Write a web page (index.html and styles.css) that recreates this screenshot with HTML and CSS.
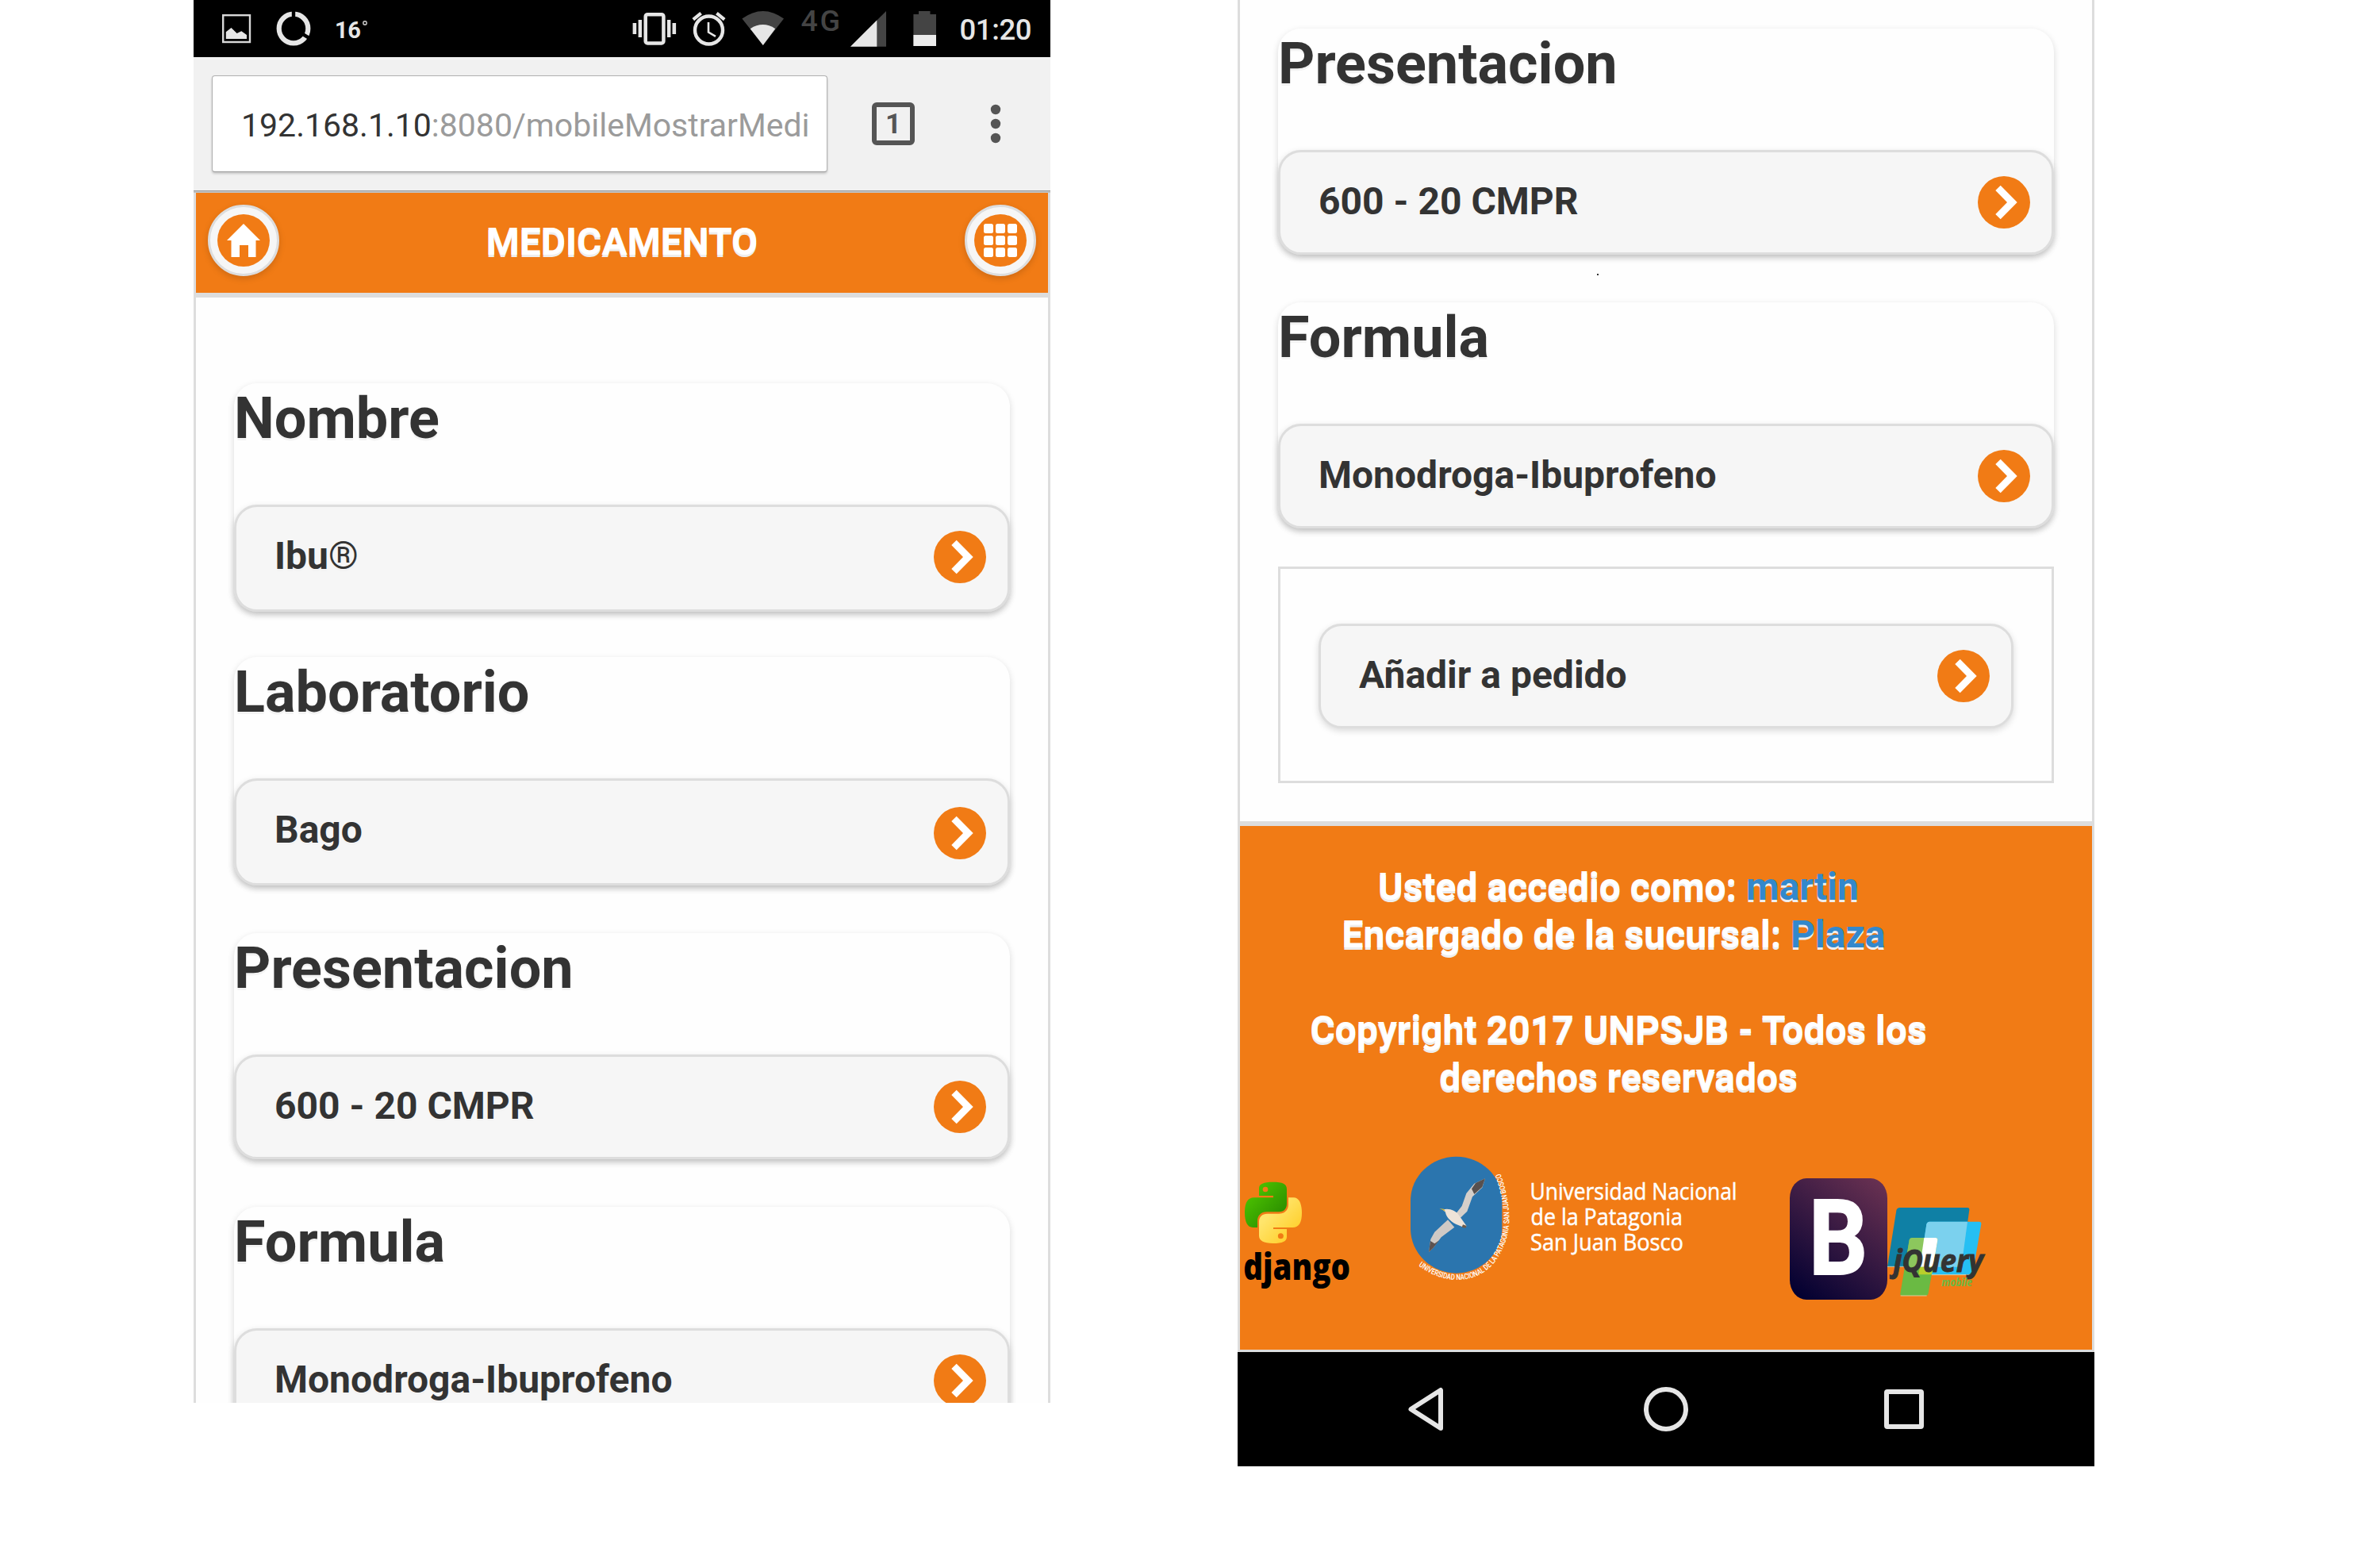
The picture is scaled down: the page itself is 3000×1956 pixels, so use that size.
FILE: index.html
```html
<!DOCTYPE html>
<html lang="es">
<head>
<meta charset="utf-8">
<title>Medicamento</title>
<link rel="stylesheet" href="styles.css">
</head>
<body>
<svg width="0" height="0" class="defs">
  <symbol id="go" viewBox="0 0 66 66">
    <circle cx="33" cy="33" r="33" fill="#f17b15"/>
    <path d="M22.3 18L28.7 11.8L49.7 33L28.7 54.2L22.3 48L37 33Z" fill="#fff"/>
  </symbol>
</svg>

<main class="board">
  <section class="phone phone-top">
    <div class="status">
      <svg width="1080" height="72" viewBox="244 0 1080 72">
        <g fill="#e6e6e6">
          <rect x="281.2" y="19.2" width="33.8" height="33.8" fill="none" stroke="#d8d8d8" stroke-width="2.4"/>
          <path d="M284.8 40.3L291.5 35L298.6 42L304.3 39.3L311 44V49H284.8Z"/>
          <circle cx="370" cy="36" r="18.3" fill="none" stroke="#e6e6e6" stroke-width="6.2"/>
          <path d="M370 12V26M380.5 42.3L392.4 49.6" stroke="#000" stroke-width="4.4" fill="none"/>
          <text x="422" y="47.8" font-size="29" font-weight="700" textLength="33">16</text>
          <circle cx="460" cy="29" r="2.2" fill="none" stroke="#ccc" stroke-width="1.4"/>
          <rect x="813.7" y="18.2" width="22.7" height="36.3" rx="2.5" fill="none" stroke="#e6e6e6" stroke-width="4.5"/>
          <path d="M797.6 29h4.6v14h-4.6zM804.6 25h4.4v22h-4.4zM841 25h4.4v22H841zM847.5 29h4.6v14h-4.6z"/>
          <g fill="none" stroke="#e6e6e6">
            <circle cx="893.5" cy="38" r="17.5" stroke-width="4.4"/>
            <path d="M893 28V40.6L902 45.8" stroke-width="2.6"/>
            <path d="M873.8 24.6L883.6 16.6M903.4 16.6L913.2 24.6" stroke-width="4.2"/>
          </g>
          <path d="M935.4 23.6Q961.8 4.6 988 23.6L961.8 57Z" fill="#444"/>
          <path d="M945.7 36.2Q961.8 26 977.2 36.2L961.8 57Z"/>
          <text x="1009.5" y="39" font-size="37.5" font-weight="500" fill="#444" textLength="49.5">4G</text>
          <path d="M1117 14V58.8H1072Z" fill="#444"/>
          <path d="M1105.3 25.6V58.8H1072Z"/>
          <path d="M1158 14h14.5v4h7.5v40h-28.6V18h6.6z" fill="#444"/>
          <path d="M1151.4 44H1180V58H1151.4Z" fill="#ececec"/>
          <text x="1209.5" y="50.2" font-size="36.5" font-weight="500" textLength="91">01:20</text>
        </g>
      </svg>
    </div>
    <div class="browser">
      <div class="url">192.168.1.10<span class="path">:8080/mobileMostrarMedi</span></div>
      <div class="tabs">1</div>
      <svg class="more" width="14" height="50" viewBox="0 0 14 50" fill="#555"><circle cx="7" cy="7" r="6.2"/><circle cx="7" cy="25" r="6.2"/><circle cx="7" cy="43" r="6.2"/></svg>
    </div>
    <div class="page">
      <header class="bar">
        <a class="round"><svg width="66" height="66" viewBox="0 0 66 66"><circle cx="33" cy="33" r="33" fill="#f17b15"/><path d="M33 12L54 33H48.5V54H39V39H28V54H17.500V33H12Z" fill="#fff"/></svg></a>
        <h1>MEDICAMENTO</h1>
        <a class="round"><svg width="66" height="66" viewBox="0 0 66 66"><circle cx="33" cy="33" r="33" fill="#f17b15"/><g fill="#fff"><rect x="12" y="12" width="12" height="12" rx="2.500"/><rect x="27" y="12" width="12" height="12" rx="2.500"/><rect x="42" y="12" width="12" height="12" rx="2.500"/><rect x="12" y="27" width="12" height="12" rx="2.500"/><rect x="27" y="27" width="12" height="12" rx="2.500"/><rect x="42" y="27" width="12" height="12" rx="2.500"/><rect x="12" y="42" width="12" height="12" rx="2.500"/><rect x="27" y="42" width="12" height="12" rx="2.500"/><rect x="42" y="42" width="12" height="12" rx="2.500"/></g></svg></a>
      </header>
      <div class="content content-top">
        <section class="group">
          <h2>Nombre</h2>
          <a class="item tall"><span>Ibu<span class="reg">®</span></span><svg class="go"><use href="#go"/></svg></a>
        </section>
        <section class="group">
          <h2>Laboratorio</h2>
          <a class="item tall low"><span>Bago</span><svg class="go"><use href="#go"/></svg></a>
        </section>
        <section class="group">
          <h2>Presentacion</h2>
          <a class="item"><span>600 - 20 CMPR</span><svg class="go"><use href="#go"/></svg></a>
        </section>
        <section class="group">
          <h2>Formula</h2>
          <a class="item"><span>Monodroga-Ibuprofeno</span><svg class="go"><use href="#go"/></svg></a>
        </section>
      </div>
    </div>
  </section>

  <section class="phone phone-bottom">
    <div class="page">
      <div class="content content-bottom">
        <section class="group">
          <h2>Presentacion</h2>
          <a class="item"><span>600 - 20 CMPR</span><svg class="go"><use href="#go"/></svg></a>
          <i class="speck"></i>
        </section>
        <section class="group">
          <h2>Formula</h2>
          <a class="item"><span>Monodroga-Ibuprofeno</span><svg class="go"><use href="#go"/></svg></a>
        </section>
        <div class="frame">
          <a class="item"><span>Añadir a pedido</span><svg class="go"><use href="#go"/></svg></a>
        </div>
      </div>
      <footer class="foot">
        <div class="credits">
          <p>Usted accedio como: <a>martin</a></p>
          <p>Encargado de la sucursal: <a>Plaza</a>&nbsp;</p>
          <p class="copy">Copyright 2017 UNPSJB - Todos los<br>derechos reservados</p>
        </div>
        <div class="logos">
          <svg class="django" width="134" height="139" viewBox="84 174 402 417">
            <defs>
              <linearGradient id="pg" x1="0" y1="0" x2="1" y2="1"><stop offset=".2" stop-color="#4abf00"/><stop offset=".8" stop-color="#2c9000"/></linearGradient>
              <linearGradient id="py" x1="0" y1="0" x2="1" y2="1"><stop offset=".3" stop-color="#ffe56c"/><stop offset=".8" stop-color="#ffd02f"/></linearGradient>
            </defs>
            <path d="M141 231V203C141 186 158 179 194 179C230 179 246 186 246 206V262C246 281 234 292 216 292H170C149 292 135 306 135 326V351H118C97 351 87 330 87 295C87 260 97 238 122 238H195V231Z" fill="url(#pg)"/>
            <circle cx="165" cy="207" r="10" fill="#f17b15"/>
            <path d="M252 238H272C293 238 303 262 303 296C303 330 293 351 268 351H195V357H246V386C246 403 230 411 194 411C158 411 141 401 141 382V330C141 311 153 299 172 299H216C239 299 252 284 252 264Z" fill="url(#py)"/>
            <circle cx="223" cy="383" r="10.500" fill="#f17b15"/>
            <text x="82" y="549" class="dj" textLength="404" lengthAdjust="spacingAndGlyphs">django</text>
          </svg>
          <svg class="seal" width="133" height="166" viewBox="702 72 399 498">
            <path id="rim" d="M744 496C850 575 985 570 1050 455C1100 370 1100 270 1048 130" fill="none"/>
            <path d="M887 83C980 83 1060 155 1060 250V355C1060 450 980 524 887 524C794 524 714 450 714 355V250C714 155 794 83 887 83Z" fill="#2b75ae"/>
            <path d="M996 166L955 185L925 222L908 270L886 298L903 314L928 290L948 235L985 200Z" fill="#d5cfca"/>
            <path d="M996 166L960 183L945 205L955 225L985 198Z" fill="#57504f"/>
            <path d="M855 322L805 368L790 395L783 444L800 428L830 388L880 350Z" fill="#cfc9c5"/>
            <path d="M789 402L783 444L800 428L822 400L805 412Z" fill="#5d5250"/>
            <path d="M836 284C850 278 872 280 892 298L926 346L918 352L885 338C862 326 848 308 846 293Z" fill="#eee3d8"/>
            <path d="M823 279L840 281L846 290Z" fill="#c9b23c"/>
            <path d="M912 340L926 345L922 353L908 350Z" fill="#6b5b4c"/>
            <text class="rimtext" textLength="672" lengthAdjust="spacingAndGlyphs"><textPath href="#rim" startOffset="0" textLength="672" lengthAdjust="spacingAndGlyphs">UNIVERSIDAD NACIONAL DE LA PATAGONIA SAN JUAN BOSCO</textPath></text>
          </svg>
          <svg class="uni" width="262" height="110" viewBox="1928 1480 262 110">
            <text x="1928.500" y="1511.700" textLength="261" lengthAdjust="spacingAndGlyphs">Universidad Nacional</text>
            <text x="1929.500" y="1544" textLength="191.500" lengthAdjust="spacingAndGlyphs">de la Patagonia</text>
            <text x="1929" y="1576" textLength="193" lengthAdjust="spacingAndGlyphs">San Juan Bosco</text>
          </svg>
          <div class="bootstrap"><span>B</span></div>
          <svg class="jquery" width="124" height="114" viewBox="477 213 372 342">
            <path d="M525 216H780Q788 216 787 224L757 440H477L511 227Q513 216 525 216Z" fill="#0f80a5"/>
            <path d="M637 269H824Q833 269 832 278L800 462Q798 470 790 470H596L625 280Q627 269 637 269Z" fill="#26bff3"/>
            <path d="M637 269H780L757 440H600L625 280Q627 269 637 269Z" fill="#7bd1ee"/>
            <path d="M570 330H659Q668 330 667 339L632 540Q630 549 622 549H532Q525 549 526 541L560 338Q562 330 570 330Z" fill="#6aba43"/>
            <path d="M570 330H617L600 440H543L560 338Q562 330 570 330Z" fill="#8cc75d"/>
            <path d="M616 330H659Q668 330 667 339L650 440H600Z" fill="#fff"/>
            <path d="M600 440H650L645 469H595Z" fill="#b9cf2b"/>
            <path d="M477 439H543M527 549H626M645 470H795" stroke="#e9d9b0" stroke-width="2.500"/>
            <text x="500" y="460" class="jq" textLength="340" lengthAdjust="spacingAndGlyphs">jQuery</text>
            <text x="682" y="512" class="jm" textLength="116" lengthAdjust="spacingAndGlyphs">mobile</text>
          </svg>
        </div>
      </footer>
    </div>
    <nav class="keys">
      <svg width="60" height="60" viewBox="0 0 60 60"><path d="M46 6V54L8.500 30Z"/></svg>
      <svg width="60" height="60" viewBox="0 0 60 60"><circle cx="30" cy="30" r="25"/></svg>
      <svg width="60" height="60" viewBox="0 0 60 60"><rect x="8" y="8" width="44" height="44" rx="1"/></svg>
    </nav>
  </section>
</main>
</body>
</html>
```
FILE: styles.css
```css
* { box-sizing: border-box; }
body {
  margin: 0;
  background: #fff;
  color: #333;
  font-family: Roboto, sans-serif;
}
.defs { display: block; height: 0; }
h1, h2, p { margin: 0; }
svg { display: block; flex: none; overflow: visible; }

.board {
  display: flex;
  align-items: flex-start;
  gap: 236px;
  height: 1956px;
  padding-left: 244px;
  overflow: hidden;
}
.phone { width: 1080px; overflow: hidden; }
.phone-top { height: 1768px; }
.phone-bottom { height: 1848px; }

.status { height: 72px; background: #000; }

.browser {
  display: flex;
  align-items: center;
  height: 171px;
  padding: 0 62px 3px 23px;
  background: linear-gradient(#999 0 1px, #c2c2c2 1px) 0 100% / 100% 3px no-repeat #f1f1f1;
}
.url {
  width: 776px;
  height: 122px;
  padding-left: 36px;
  border: 1px solid #b0b0b0;
  border-bottom-color: #999;
  border-radius: 4px;
  background: #fff;
  box-shadow: 0 2px 3px rgba(0, 0, 0, .18);
  font-size: 41px;
  line-height: 124px;
  white-space: nowrap;
}
.path { color: #9b9b9b; }
.tabs {
  width: 54px;
  height: 54px;
  margin-left: 56px;
  border: 6px solid #555;
  border-radius: 6px;
  color: #555;
  font-size: 35px;
  font-weight: 700;
  line-height: 43px;
  text-align: center;
}
.more { margin-left: auto; }

.page {
  border: solid #ddd;
  border-width: 0 3px;
  background: #fefefe;
}
.bar {
  display: flex;
  align-items: flex-start;
  justify-content: space-between;
  height: 132px;
  padding: 15px;
  border-bottom: 6px solid #ddd;
  background: #f17b15;
}
.round {
  display: flex;
  align-items: center;
  justify-content: center;
  width: 90px;
  height: 90px;
  border: 3px solid #ddd;
  border-radius: 50%;
  background: #f6f6f6;
  box-shadow: 0 3px 9px rgba(0, 0, 0, .15);
}
.bar h1 {
  padding-top: 17px;
  color: #fff;
  font-size: 48px;
  line-height: 60px;
  text-shadow: 0 3px 0 #eee;
}

.content { padding: 0 48px; }
.content-top { padding-top: 108px; }
.content-bottom { height: 1035px; padding-top: 36px; }

.group {
  position: relative;
  height: 285px;
  margin-bottom: 60px;
  border-radius: 29px;
  box-shadow: 0 3px 9px rgba(0, 0, 0, .15);
}
.group h2 {
  height: 153px;
  font-size: 72px;
  line-height: 89px;
  text-shadow: 0 3px 0 #f3f3f3;
}
.group:has(.tall) { height: 288px; margin-bottom: 57px; }
.group:has(.low) { margin-bottom: 60px; }

.item {
  display: flex;
  justify-content: space-between;
  height: 132px;
  padding: 30px 27px 0 48px;
  border: 3px solid #ddd;
  border-radius: 29px;
  background: #f6f6f6;
  box-shadow: 0 3px 9px rgba(0, 0, 0, .15);
  font-size: 48px;
  font-weight: 700;
  line-height: 64px;
  text-shadow: 0 3px 0 #f3f3f3;
}
.tall { height: 135px; }
.reg { font-weight: 400; }
.go { width: 66px; height: 66px; }
.low .go { margin-top: 3px; }

.speck {
  position: absolute;
  left: 402px;
  top: 309px;
  width: 2px;
  height: 2px;
  background: #333;
}

.frame {
  height: 273px;
  margin-top: -12px;
  padding: 69px 48px;
  border: 3px solid #ddd;
}

.foot {
  height: 669px;
  border: solid #ddd;
  border-width: 6px 0 3px;
  background: #f17b15;
}
.credits {
  padding: 47px 120px 0 0;
  color: #fff;
  font-size: 48px;
  font-weight: 700;
  line-height: 60px;
  text-align: center;
  text-shadow: 0 3px 0 #eee;
}
.credits a { color: #38c; }
.copy { margin-top: 60px; }

.logos {
  display: flex;
  align-items: flex-start;
  margin-top: 66px;
  padding-left: 5px;
}
.django { margin-top: 34px; }
.dj { font: 800 140px "Open Sans", sans-serif; }
.seal { margin-left: 72px; }
.rimtext { fill: #fff; font: 500 30px Roboto, sans-serif; }
.uni {
  margin: 26px 0 0 21px;
  fill: #fff;
  stroke: #fff;
  stroke-width: .5;
  font: 400 28.5px "Open Sans", sans-serif;
}
.bootstrap {
  display: flex;
  justify-content: center;
  width: 123px;
  height: 153px;
  margin: 31px 0 0 66px;
  border-radius: 21px / 25px;
  background: linear-gradient(37deg, #020031 5%, #6d3353 100%);
  color: #fff;
  font: 700 132px/153px Roboto, sans-serif;
  -webkit-text-stroke: 2px #fff;
}
.bootstrap span { transform: scaleX(.88); }
.jquery { margin-top: 67px; }
.jq { fill: #333; stroke: #333; stroke-width: 3; font: italic 700 118px "Open Sans", sans-serif; }
.jm { fill: #6aba43; font: italic 700 44px "Open Sans", sans-serif; }

.keys {
  display: flex;
  justify-content: center;
  align-items: center;
  gap: 240px;
  height: 144px;
  background: #000;
  fill: none;
  stroke: #e6e6e6;
  stroke-width: 6;
  stroke-linejoin: round;
}
```
